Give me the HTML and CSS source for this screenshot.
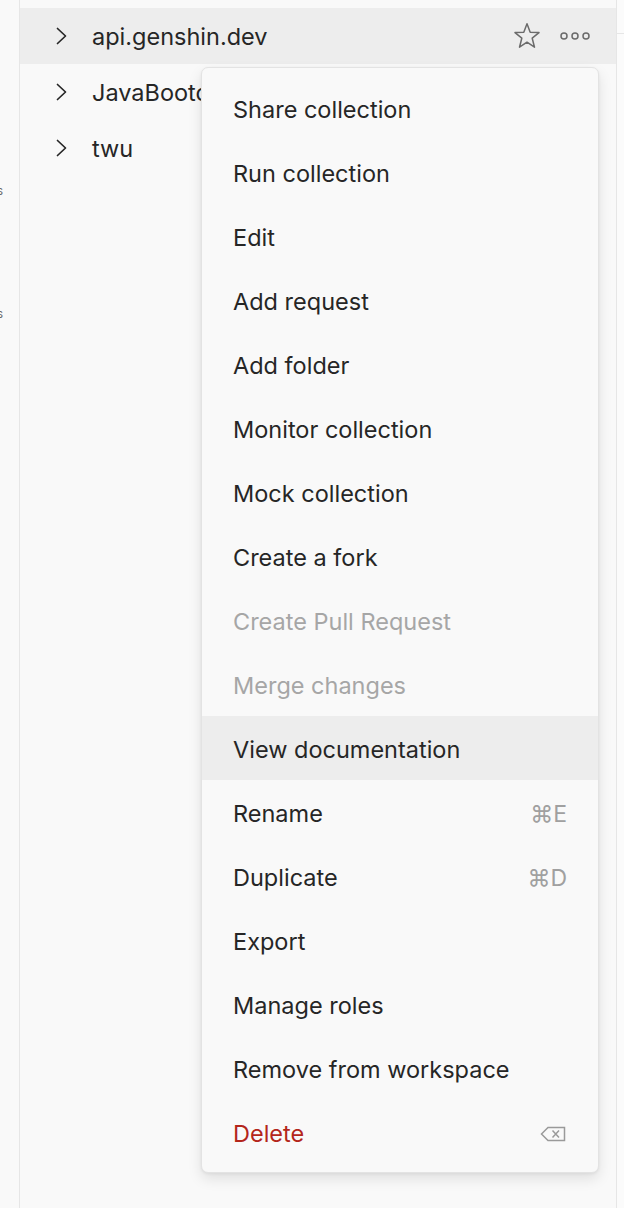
FILE: index.html
```html
<!DOCTYPE html>
<html>
<head>
<meta charset="utf-8">
<link rel="stylesheet" href="styles.css">
</head>
<body>
<div class="app">
  <aside class="rail">
    <div class="rail-label l1">Collections</div>
    <div class="rail-label l2">APIs</div>
  </aside>
  <main class="panel">
    <div class="row active">
      <svg class="chev" viewBox="0 0 12 18" width="12" height="18"><path d="M1.5 1.5 L9.5 9 L1.5 16.5" fill="none" stroke="#262626" stroke-width="1.7" stroke-linecap="round" stroke-linejoin="round"/></svg>
      <span class="name">api.genshin.dev</span>
      <svg class="star" viewBox="0 0 28 28" width="28" height="28"><path d="M14 1.8 L17.2 10.2 L26 10.6 L19.2 16.2 L21.5 25.2 L14 20.2 L6.5 25.2 L8.8 16.2 L2 10.6 L10.8 10.2 Z" fill="none" stroke="#6b6b6b" stroke-width="1.5" stroke-linejoin="round"/></svg>
      <svg class="dots" viewBox="0 0 30 10" width="30" height="10"><circle cx="4" cy="5" r="3" fill="none" stroke="#6b6b6b" stroke-width="1.5"/><circle cx="15" cy="5" r="3" fill="none" stroke="#6b6b6b" stroke-width="1.5"/><circle cx="26" cy="5" r="3" fill="none" stroke="#6b6b6b" stroke-width="1.5"/></svg>
    </div>
    <div class="row">
      <svg class="chev" viewBox="0 0 12 18" width="12" height="18"><path d="M1.5 1.5 L9.5 9 L1.5 16.5" fill="none" stroke="#262626" stroke-width="1.7" stroke-linecap="round" stroke-linejoin="round"/></svg>
      <span class="name">JavaBootcamp</span>
    </div>
    <div class="row">
      <svg class="chev" viewBox="0 0 12 18" width="12" height="18"><path d="M1.5 1.5 L9.5 9 L1.5 16.5" fill="none" stroke="#262626" stroke-width="1.7" stroke-linecap="round" stroke-linejoin="round"/></svg>
      <span class="name">twu</span>
    </div>

    <div class="menu">
      <div class="item">Share collection</div>
      <div class="item">Run collection</div>
      <div class="item">Edit</div>
      <div class="item">Add request</div>
      <div class="item">Add folder</div>
      <div class="item">Monitor collection</div>
      <div class="item">Mock collection</div>
      <div class="item">Create a fork</div>
      <div class="item disabled">Create Pull Request</div>
      <div class="item disabled">Merge changes</div>
      <div class="item hover">View documentation</div>
      <div class="item">Rename<span class="kbd">⌘E</span></div>
      <div class="item">Duplicate<span class="kbd">⌘D</span></div>
      <div class="item">Export</div>
      <div class="item">Manage roles</div>
      <div class="item">Remove from workspace</div>
      <div class="item danger">Delete
        <svg class="bksp" viewBox="0 0 26 20" width="26" height="20"><path d="M8 3.5 H24.5 V16.5 H8 L1.5 10 Z" fill="none" stroke="#9a9a9a" stroke-width="1.5" stroke-linejoin="miter"/><path d="M12.5 6.5 L19 13.5 M19 6.5 L12.5 13.5" stroke="#9a9a9a" stroke-width="1.5"/></svg>
      </div>
    </div>
  </main>
  <div class="edge"></div>
</div>
</body>
</html>
```
FILE: styles.css
```css
html, body {
  margin: 0;
  padding: 0;
  background: #f9f9f9;
}
body {
  font-family: Inter, "Noto Sans", "Liberation Sans", sans-serif;
  color: #262626;
}
.app {
  display: flex;
  height: 1208px;
  overflow: hidden;
}
.rail {
  width: 19px;
  flex: none;
  border-right: 1px solid #e6e6e6;
  background: #f9f9f9;
  overflow: hidden;
  position: relative;
}
.rail-label {
  position: absolute;
  right: 16px;
  font-size: 12px;
  color: #6b6b6b;
  white-space: nowrap;
}
.l1 { top: 183px; }
.l2 { top: 306px; }
.panel {
  width: 596px;
  flex: none;
  padding-top: 8px;
  position: relative;
  background: #f9f9f9;
}
.edge {
  flex: 1;
  border-left: 1px solid #e6e6e6;
  background: #fbfbfb;
  position: relative;
}
.edge::after {
  content: "";
  position: absolute;
  left: 0; right: 0; top: 33px;
  border-top: 1px solid #e6e6e6;
}
.row {
  height: 56px;
  display: flex;
  align-items: center;
  padding-left: 36px;
  padding-right: 26px;
  font-size: 23.5px;
  line-height: 28px;
}
.row.active {
  background: #ededed;
}
.chev {
  margin-right: 24px;
  flex: none;
}
.name {
  flex: 1;
  padding-top: 1px;
}
.star {
  margin-right: 19px;
}
.menu {
  position: absolute;
  left: 181px;
  top: 67px;
  width: 396px;
  background: #f9f9f9;
  border: 1px solid #e3e3e3;
  border-radius: 7px;
  box-shadow: 0 6px 14px rgba(0,0,0,0.10), 0 1px 3px rgba(0,0,0,0.06);
  padding: 8px 0 8px;
}
.item {
  height: 64px;
  display: flex;
  align-items: center;
  justify-content: space-between;
  padding: 4px 31px 0 31px;
  box-sizing: border-box;
  font-size: 23.5px;
  line-height: 28px;
  color: #262626;
}
.item.hover {
  background: #ededed;
}
.item.disabled {
  color: #a6a6a6;
}
.item.danger {
  color: #b4261b;
}
.kbd {
  color: #a0a0a0;
  font-size: 23px;
}
.bksp {
  margin-right: 1px;
}
```
